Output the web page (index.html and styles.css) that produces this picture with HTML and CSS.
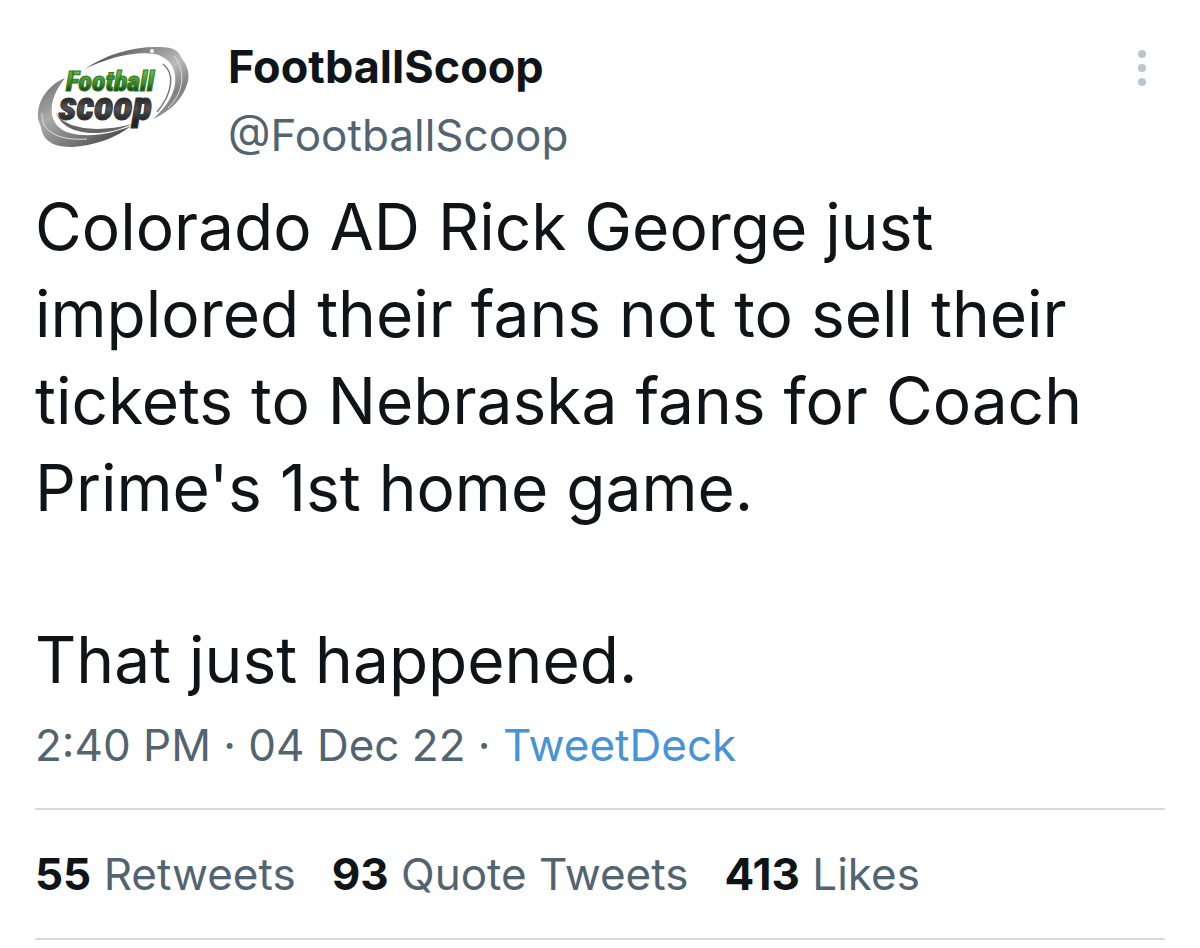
FILE: index.html
```html
<!DOCTYPE html>
<html lang="en">
<head>
<meta charset="utf-8">
<meta name="viewport" content="width=device-width, initial-scale=1">
<title>FootballScoop</title>
<link rel="stylesheet" href="styles.css">
</head>
<body>
<article class="tweet">
  <header class="head">
    <svg class="avatar" viewBox="25 30 180 130" role="img" aria-label="Football Scoop logo">
      <defs>
        <linearGradient id="silver" x1="0" y1="0" x2="1" y2="1">
          <stop offset="0" stop-color="#333"/><stop offset=".4" stop-color="#999"/><stop offset=".55" stop-color="#bbb"/><stop offset=".75" stop-color="#808080"/><stop offset="1" stop-color="#aaa"/>
        </linearGradient>
        <linearGradient id="steel" x1="0" y1="0" x2="1" y2="1">
          <stop offset="0" stop-color="#666"/><stop offset=".35" stop-color="#aaa"/><stop offset=".65" stop-color="#777"/><stop offset="1" stop-color="#333"/>
        </linearGradient>
        <linearGradient id="green" x1="0" y1="0" x2="0" y2="1">
          <stop offset=".2" stop-color="#6cb848"/><stop offset=".55" stop-color="#3c8d2c"/><stop offset=".8" stop-color="#123c12"/>
        </linearGradient>
        <linearGradient id="dark" x1="0" y1="0" x2="0" y2="1">
          <stop offset=".3" stop-color="#222"/><stop offset=".55" stop-color="#555"/><stop offset=".8" stop-color="#222"/>
        </linearGradient>
      </defs>
      <path fill="url(#silver)" d="M85 69C106 54 135 46 160 47C173 47 179 51 181 57C186 64 190 71 188 81C184 98 171 111 153 119C164 109 173 98 175 84C177 69 170 58 155 54C133 51 108 58 85 69Z"/>
      <path fill="none" stroke="#777" stroke-width="1.5" d="M163 64C175 73 173 93 157 112"/>
      <path fill="none" stroke="#ddd" stroke-width="1" d="M174 56C187 72 183 94 168 108"/>
      <path fill="url(#steel)" d="M65 78C50 84 38 99 38 115C37 120 41 125 42 132C46 143 56 147 72 147C93 146 116 138 131 126C112 134 88 138 70 133C48 127 45 103 65 78Z"/>
      <path fill="#666" d="M56 112C63 128 95 134 132 124C105 138 63 137 56 112Z"/>
      <path fill="none" stroke="#ddd" stroke-width="1" d="M42 113C41 129 54 141 87 139"/>
      <circle cx="152" cy="51" r="2" fill="#fff"/>
      <text class="logo-top" x="66" y="91">Football</text>
      <text class="logo-bottom" x="59" y="120">scoop</text>
    </svg>
    <div class="names">
      <strong class="name">FootballScoop</strong>
      <span class="handle">@FootballScoop</span>
    </div>
    <button class="more" type="button" aria-label="More">
      <svg viewBox="0 0 10 36" width="10" height="36"><circle cx="5" cy="4" r="4"/><circle cx="5" cy="18" r="4"/><circle cx="5" cy="32" r="4"/></svg>
    </button>
  </header>
  <div class="body">
    <p>Colorado AD Rick George just implored their fans not to sell their tickets to Nebraska fans for Coach Prime's 1st home game.</p>
    <p>That just happened.</p>
  </div>
  <p class="meta"><time>2:40 PM · 04 Dec 22</time> · <a class="source" href="#">TweetDeck</a></p>
  <div class="stats">
    <span><strong>55</strong> Retweets</span>
    <span><strong>93</strong> Quote Tweets</span>
    <span><strong>413</strong> Likes</span>
  </div>
</article>
</body>
</html>
```
FILE: styles.css
```css
* { box-sizing: border-box; }
body { margin: 0; background: #fff; color: #0f1419; font-family: Inter, "Liberation Sans", sans-serif; font-size: 44px; line-height: 68px; }
p { margin: 0; }
.tweet { padding: 30px 35px 0; }
.head { display: flex; align-items: flex-start; }
.avatar { width: 180px; height: 130px; flex: none; margin-left: -10px; }
.names { display: flex; flex-direction: column; flex: 1; margin-left: 23px; padding-top: 3px; }
.name { font-size: 45px; font-weight: 700; }
.handle, .meta, .stats { color: #536471; }
.more { border: 0; background: none; padding: 0; margin: 20px 18px 0 0; line-height: 0; cursor: pointer; }
.more svg { display: block; fill: #b9c6cf; }
.body { margin-top: 14px; font-size: 64px; line-height: 87px; }
.body p + p { margin-top: 85px; }
.meta { margin-top: 8px; }
.source { color: #4793d8; text-decoration: none; }
.stats { display: flex; flex-wrap: wrap; gap: 0 36px; margin-top: 29px; padding: 30px 0; border: solid #d0dcdf; border-width: 2px 0; }
.stats strong { color: #0f1419; font-weight: 700; }
.logo-top, .logo-bottom { font-family: "Roboto Condensed", "Liberation Sans Narrow", "Liberation Sans", sans-serif; font-style: italic; font-weight: 900; stroke-width: 1px; }
.logo-top { font-size: 28px; fill: url(#green); stroke: #2d7a26; }
.logo-bottom { font-size: 40px; fill: url(#dark); stroke: #333; }
```
